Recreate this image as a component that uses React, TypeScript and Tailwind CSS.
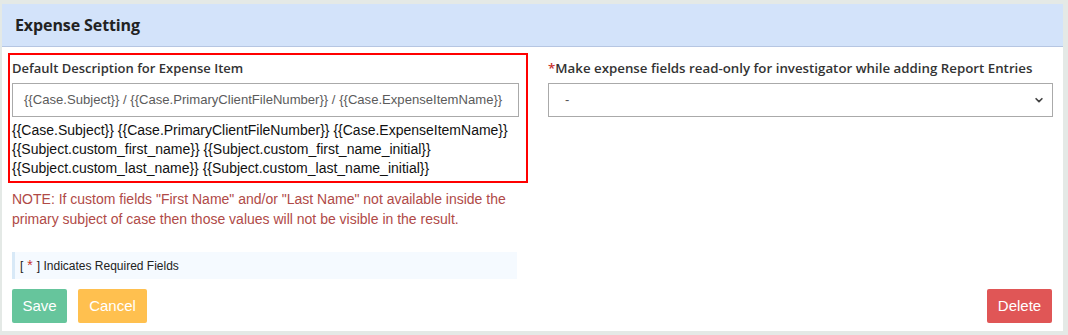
import React from 'react';

const openSans = { fontFamily: '"Open Sans", "Liberation Sans", sans-serif' };

export default function App() {
  return (
    <div className="min-h-screen bg-[#e4e9e6] pt-[4px] pl-[2px] pr-[5px] pb-[4px] font-['Liberation_Sans',Arial,sans-serif]">
      <div className="bg-white flex flex-col">
        {/* Header */}
        <div className="h-[43px] bg-[#d3e3fa] border-b border-[#b6c6e2] flex items-center pl-[13px]">
          <h2 className="font-['Open_Sans',sans-serif] font-bold text-[16px] text-[#222] tracking-[-0.1px]">Expense Setting</h2>
        </div>

        {/* Body */}
        <div className="flex pt-[6px] pl-[6px]">
          <div className="w-[520px] flex flex-col">
            <div className="border-2 border-[#ff0000] pl-[2px] pr-[7px] pt-[3px] pb-[3px]">
              <label className="block font-['Open_Sans',sans-serif] font-semibold text-[13px] text-[#333] leading-[20px]">
                Default Description for Expense Item
              </label>
              <div className="mt-[5px] h-[34px] border border-[#aaaaaa] flex items-center pl-[11px]">
                <span className="text-[13.1px] text-[#5b5b5b]">
                  {'{{Case.Subject}} / {{Case.PrimaryClientFileNumber}} / {{Case.ExpenseItemName}}'}
                </span>
              </div>
              <div className="mt-[4px] text-[14px] leading-[19px] text-[#111]">
                <div>{'{{Case.Subject}} {{Case.PrimaryClientFileNumber}} {{Case.ExpenseItemName}}'}</div>
                <div>{'{{Subject.custom_first_name}} {{Subject.custom_first_name_initial}}'}</div>
                <div>{'{{Subject.custom_last_name}} {{Subject.custom_last_name_initial}}'}</div>
              </div>
            </div>
            <p className="pl-[4px] mt-[6px] text-[14px] leading-[20px] text-[#b04a47]">
              NOTE: If custom fields "First Name" and/or "Last Name" not available inside the primary subject of case then those values will not be visible in the result.
            </p>
            <div className="ml-[4px] mt-[23px] w-[505px] h-[27px] bg-[#f5faff] border-l-[3px] border-[#d8e9f7] flex items-center pl-[5px] text-[12px] text-[#222]">
              [ <span className="text-[#c9302c] text-[14px] mx-[4px]">*</span> ] Indicates Required Fields
            </div>
          </div>

          <div className="ml-[20px] w-[505px] flex flex-col pt-[5px]">
            <label className="block text-[13.3px] font-semibold leading-[20px] text-[#333]" style={openSans}>
              <span className="text-[#c9302c]">*</span>Make expense fields read-only for investigator while adding Report Entries
            </label>
            <div className="mt-[5px] h-[34px] border border-[#aaaaaa] flex items-center justify-between pl-[16px] pr-[8px]">
              <span className="text-[13px] text-[#555]">-</span>
              <svg width="10" height="10" viewBox="0 0 24 24" fill="none" stroke="#444" strokeWidth="4" strokeLinecap="round" strokeLinejoin="round">
                <polyline points="5 9 12 16 19 9" />
              </svg>
            </div>
          </div>
        </div>

        {/* Footer */}
        <div className="flex justify-between items-center pl-[10px] pr-[11px] mt-[10px] pb-[8px]">
          <div className="flex gap-[11px]">
            <button className="h-[34px] w-[55px] rounded-[2px] bg-[#66c59c] text-white text-[15px]">Save</button>
            <button className="h-[34px] w-[69px] rounded-[2px] bg-[#ffc04f] text-white text-[15px]">Cancel</button>
          </div>
          <button className="h-[34px] w-[65px] rounded-[2px] bg-[#e05656] text-white text-[15px]">Delete</button>
        </div>
      </div>
    </div>
  );
}
